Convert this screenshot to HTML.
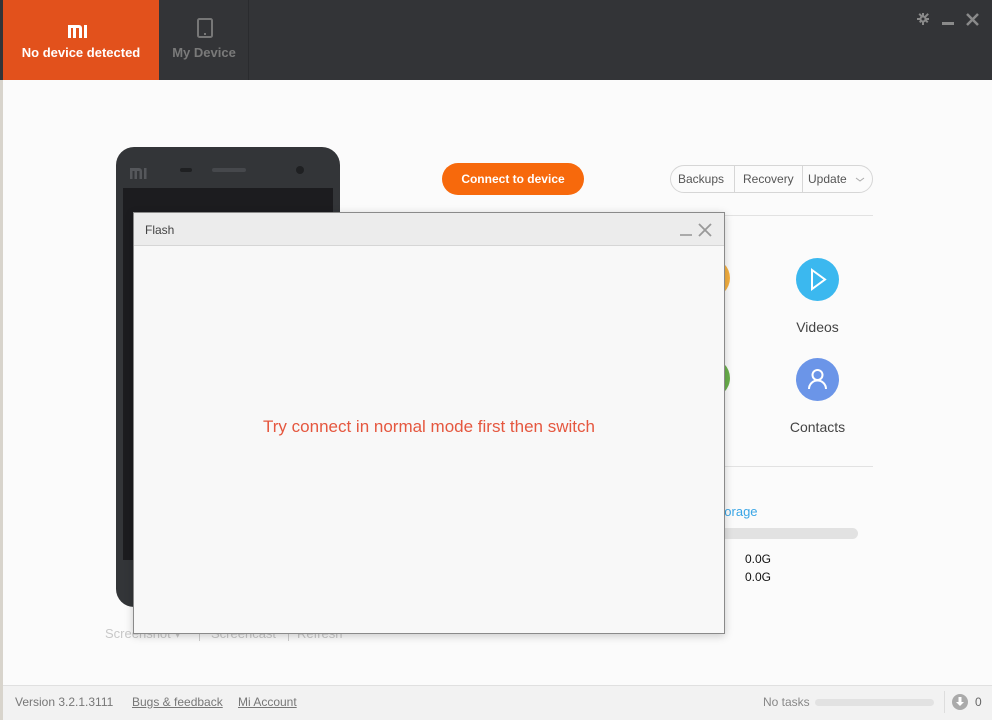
<!DOCTYPE html>
<html><head><meta charset="utf-8"><style>
*{margin:0;padding:0;box-sizing:border-box}
body{width:992px;height:720px;overflow:hidden;background:#fbfbfb;font-family:"Liberation Sans",sans-serif;position:relative}
.abs{position:absolute}
</style></head><body>
<div class="abs" style="left:0;top:0;width:3px;height:720px;background:#d8d4cc"></div>
<!-- header -->
<div class="abs" style="left:0;top:0;width:992px;height:80px;background:#333437"></div>
<div class="abs" style="left:3px;top:0;width:156px;height:80px;background:#e2511c"></div>
<div class="abs" style="left:248px;top:0;width:1px;height:80px;background:#2a2b2e"></div>
<svg class="abs" style="left:68px;top:25px" width="19" height="13"><path d="M0 0h11a3 3 0 0 1 3 3v10h-3V3H8v10H5V3H3v10H0z M16 0h3v13h-3z" fill="#fff"/></svg>
<div class="abs" style="left:3px;top:45px;width:156px;text-align:center;color:#fff;font-weight:bold;font-size:13px">No device detected</div>
<svg class="abs" style="left:197px;top:18px" width="16" height="20"><rect x="1" y="1" width="14" height="18" rx="1.5" fill="none" stroke="#777" stroke-width="2"/><rect x="7" y="15" width="2" height="2" fill="#777"/></svg>
<div class="abs" style="left:159px;top:45px;width:90px;text-align:center;color:#7a7a7a;font-weight:bold;font-size:13px">My Device</div>
<svg class="abs" style="left:916px;top:12px" width="64" height="16"><g fill="#8a8a8a"><circle cx="7" cy="7" r="3.5"/><path d="M6 1h2v12H6zM1 6h12v2H1zM2.5 2.5l1.4-1.4 8.5 8.5-1.4 1.4zM11.5 1.1l1.4 1.4-8.5 8.5-1.4-1.4z"/></g><circle cx="7" cy="7" r="1.5" fill="#333437"/><rect x="26" y="10" width="12" height="3" fill="#8a8a8a"/><path d="M51 2l11 11M62 2L51 13" stroke="#8a8a8a" stroke-width="2.5"/></svg>
<!-- phone -->
<div class="abs" style="left:116px;top:147px;width:224px;height:460px;background:#333538;border-radius:18px"></div>
<div class="abs" style="left:123px;top:188px;width:210px;height:372px;background:#1c1c1f"></div>
<svg class="abs" style="left:130px;top:168px" width="17" height="11"><path d="M0 0h9a3 3 0 0 1 3 3v8h-2.5V3H7v8H4.5V3H2.5v8H0z M14 0h2.5v11H14z" fill="#55575b"/></svg>
<div class="abs" style="left:180px;top:168px;width:12px;height:4px;border-radius:2px;background:#1f2022"></div>
<div class="abs" style="left:212px;top:168px;width:34px;height:4px;border-radius:2px;background:#46484c"></div>
<div class="abs" style="left:296px;top:166px;width:8px;height:8px;border-radius:4px;background:#1f2022"></div>
<div class="abs" style="left:105px;top:626px;font-size:13px;color:#c8c8c8">Screenshot ▾</div>
<div class="abs" style="left:199px;top:627px;width:1px;height:14px;background:#ccc"></div>
<div class="abs" style="left:211px;top:626px;font-size:13px;color:#c8c8c8">Screencast</div>
<div class="abs" style="left:288px;top:627px;width:1px;height:14px;background:#ccc"></div>
<div class="abs" style="left:297px;top:626px;font-size:13px;color:#c8c8c8">Refresh</div>
<!-- connect -->
<div class="abs" style="left:442px;top:163px;width:142px;height:32px;border-radius:16px;background:#f7690c;color:#fff;font-weight:bold;font-size:12px;text-align:center;line-height:32px">Connect to device</div>
<div class="abs" style="left:670px;top:165px;width:203px;height:28px;border:1px solid #d6d6d6;border-radius:14px;font-size:12px;color:#555;line-height:26px">
<span class="abs" style="left:7px">Backups</span><span class="abs" style="left:63px;top:0;width:1px;height:26px;background:#d6d6d6"></span>
<span class="abs" style="left:72px">Recovery</span><span class="abs" style="left:131px;top:0;width:1px;height:26px;background:#d6d6d6"></span>
<span class="abs" style="left:137px">Update</span>
<svg class="abs" style="left:184px;top:11px" width="10" height="6"><path d="M1 1l4 3 4-3" fill="none" stroke="#aaa"/></svg></div>
<div class="abs" style="left:660px;top:215px;width:213px;height:1px;background:#e2e2e2"></div>
<div class="abs" style="left:660px;top:466px;width:213px;height:1px;background:#e2e2e2"></div>
<div class="abs" style="left:690px;top:258px;width:40px;height:40px;border-radius:20px;background:#f5b041"></div>
<div class="abs" style="left:690px;top:358px;width:40px;height:40px;border-radius:20px;background:#6ab04c"></div>
<div class="abs" style="left:796px;top:258px;width:43px;height:43px;border-radius:22px;background:#3bb8ef"></div>
<svg class="abs" style="left:796px;top:258px" width="43" height="43"><path d="M16 12l13 9.5-13 9.5z" fill="none" stroke="#fff" stroke-width="2"/></svg>
<div class="abs" style="left:796px;top:358px;width:43px;height:43px;border-radius:22px;background:#6b95e8"></div>
<svg class="abs" style="left:796px;top:358px" width="43" height="43"><circle cx="21.5" cy="17" r="5" fill="none" stroke="#fff" stroke-width="2"/><path d="M13 31a8.5 8.5 0 0 1 17 0" fill="none" stroke="#fff" stroke-width="2"/></svg>
<div class="abs" style="left:780px;top:319px;width:75px;text-align:center;font-size:14px;color:#444">Videos</div>
<div class="abs" style="left:780px;top:419px;width:75px;text-align:center;font-size:14px;color:#444">Contacts</div>
<div class="abs" style="left:712px;top:504px;font-size:13px;color:#3aa6e6">Storage</div>
<div class="abs" style="left:700px;top:528px;width:158px;height:11px;border-radius:6px;background:#e2e2e2"></div>
<div class="abs" style="left:745px;top:552px;font-size:12px;color:#111">0.0G</div>
<div class="abs" style="left:745px;top:570px;font-size:12px;color:#111">0.0G</div>
<!-- dialog -->
<div class="abs" style="left:133px;top:212px;width:592px;height:422px;background:#f8f8f8;border:1px solid #8a8a8a;box-shadow:0 2px 8px rgba(0,0,0,.2)">
<div style="height:33px;background:#ececec;border-bottom:1px solid #d6d6d6;position:relative">
<span class="abs" style="left:11px;top:10px;font-size:12px;color:#444">Flash</span>
<svg class="abs" style="left:545px;top:9px" width="40" height="16"><rect x="1" y="12" width="12" height="2" fill="#aaa"/><path d="M20 2l12 12M32 2L20 14" stroke="#999" stroke-width="1.8"/></svg>
</div>
<div class="abs" style="left:0;top:204px;width:590px;text-align:center;font-size:17px;color:#e5573f">Try connect in normal mode first then switch</div>
</div>
<!-- footer -->
<div class="abs" style="left:3px;top:685px;width:989px;height:35px;background:#f2f2f2;border-top:1px solid #e0e0e0"></div>
<div class="abs" style="left:15px;top:695px;font-size:12px;color:#777">Version 3.2.1.3111</div>
<div class="abs" style="left:132px;top:695px;font-size:12px;color:#777;text-decoration:underline">Bugs &amp; feedback</div>
<div class="abs" style="left:238px;top:695px;font-size:12px;color:#777;text-decoration:underline">Mi Account</div>
<div class="abs" style="left:763px;top:695px;font-size:12px;color:#888">No tasks</div>
<div class="abs" style="left:815px;top:699px;width:119px;height:7px;border-radius:4px;background:#e2e2e2"></div>
<div class="abs" style="left:944px;top:691px;width:1px;height:22px;background:#ddd"></div>
<div class="abs" style="left:952px;top:694px;width:16px;height:16px;border-radius:8px;background:#aaa"></div>
<svg class="abs" style="left:952px;top:694px" width="16" height="16"><path d="M6.5 3h3v5h2.5L8 12 4 8h2.5z" fill="#fff"/></svg>
<div class="abs" style="left:975px;top:695px;font-size:12px;color:#666">0</div>
</body></html>
